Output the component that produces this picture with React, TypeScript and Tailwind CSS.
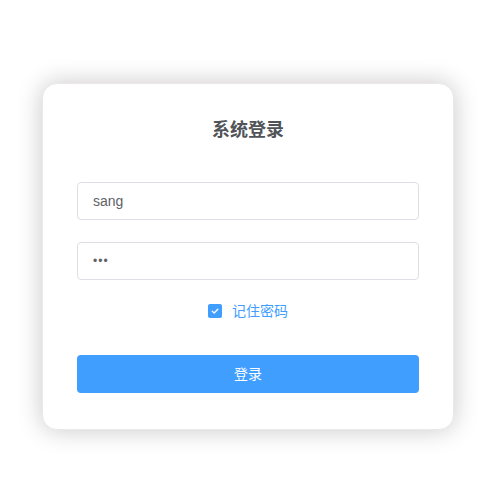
import React from 'react';

const font = { fontFamily: '"Liberation Sans", "Noto Sans CJK SC", sans-serif' };

export default function App() {
  return (
    <div className="min-h-[493px] w-[500px] bg-white pt-[83px]" style={font}>
      <div className="ml-[42px] w-[412px] rounded-[15px] border border-[#eaeaea] bg-white px-[34px] pt-[34px] pb-[36px] shadow-[0_0_25px_#cac6c6]">
        <h3 className="text-center text-[18px] leading-[24px] font-bold text-[#505458]">系统登录</h3>

        <div className="mt-[40px] flex flex-col gap-[22px]">
          <input
            type="text"
            readOnly
            value="sang"
            className="h-[38px] w-full rounded-[4px] border border-[#dcdfe6] bg-white px-[15px] text-[14px] text-[#606266] outline-none"
          />
          <input
            type="password"
            readOnly
            value="123"
            className="h-[38px] w-full rounded-[4px] border border-[#dcdfe6] bg-white px-[15px] text-[12px] tracking-[1px] text-[#606266] outline-none"
          />
        </div>

        <div className="mt-[21px] flex h-[20px] items-center justify-center gap-[10px]">
          <span className="flex h-[14px] w-[14px] items-center justify-center rounded-[2px] bg-[#409eff]">
            <svg width="10" height="10" viewBox="0 0 10 10" fill="none">
              <path d="M2.2 5.1 L4.2 7 L7.8 3.2" stroke="white" strokeWidth="1.3" strokeLinecap="round" strokeLinejoin="round" />
            </svg>
          </span>
          <span className="text-[14px] leading-[20px] text-[#409eff]">记住密码</span>
        </div>

        <button className="mt-[34px] flex h-[38px] w-full items-center justify-center rounded-[4px] bg-[#409eff] text-[14px] text-white">
          登录
        </button>
      </div>
    </div>
  );
}
